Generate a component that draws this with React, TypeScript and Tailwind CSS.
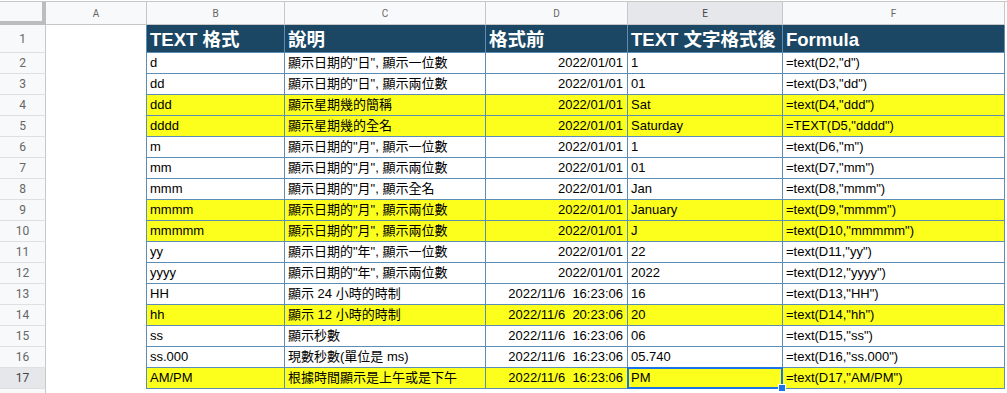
import React from "react";

type Row = { b: string; c: string; d: string; e: string; f: string; y?: boolean };

const rows: Row[] = [
  { b: "d", c: '顯示日期的"日", 顯示一位數', d: "2022/01/01", e: "1", f: '=text(D2,"d")' },
  { b: "dd", c: '顯示日期的"日", 顯示兩位數', d: "2022/01/01", e: "01", f: '=text(D3,"dd")' },
  { b: "ddd", c: "顯示星期幾的簡稱", d: "2022/01/01", e: "Sat", f: '=text(D4,"ddd")', y: true },
  { b: "dddd", c: "顯示星期幾的全名", d: "2022/01/01", e: "Saturday", f: '=TEXT(D5,"dddd")', y: true },
  { b: "m", c: '顯示日期的"月", 顯示一位數', d: "2022/01/01", e: "1", f: '=text(D6,"m")' },
  { b: "mm", c: '顯示日期的"月", 顯示兩位數', d: "2022/01/01", e: "01", f: '=text(D7,"mm")' },
  { b: "mmm", c: '顯示日期的"月", 顯示全名', d: "2022/01/01", e: "Jan", f: '=text(D8,"mmm")' },
  { b: "mmmm", c: '顯示日期的"月", 顯示兩位數', d: "2022/01/01", e: "January", f: '=text(D9,"mmmm")', y: true },
  { b: "mmmmm", c: '顯示日期的"月", 顯示兩位數', d: "2022/01/01", e: "J", f: '=text(D10,"mmmmm")', y: true },
  { b: "yy", c: '顯示日期的"年", 顯示一位數', d: "2022/01/01", e: "22", f: '=text(D11,"yy")' },
  { b: "yyyy", c: '顯示日期的"年", 顯示兩位數', d: "2022/01/01", e: "2022", f: '=text(D12,"yyyy")' },
  { b: "HH", c: "顯示 24 小時的時制", d: "2022/11/6  16:23:06", e: "16", f: '=text(D13,"HH")' },
  { b: "hh", c: "顯示 12 小時的時制", d: "2022/11/6  20:23:06", e: "20", f: '=text(D14,"hh")', y: true },
  { b: "ss", c: "顯示秒數", d: "2022/11/6  16:23:06", e: "06", f: '=text(D15,"ss")' },
  { b: "ss.000", c: "現數秒數(單位是 ms)", d: "2022/11/6  16:23:06", e: "05.740", f: '=text(D16,"ss.000")' },
  { b: "AM/PM", c: "根據時間顯示是上午或是下午", d: "2022/11/6  16:23:06", e: "PM", f: '=text(D17,"AM/PM")', y: true },
];

export default function App() {
  return (
    <div className="w-[1007px] h-[393px] overflow-hidden bg-white text-black font-['Liberation_Sans','Noto_Sans_CJK_TC',sans-serif]">
      <div className="h-px bg-white" />
      {/* column headers */}
      <div className="flex border-t border-[#c7c7c7] font-['Roboto',sans-serif] text-[10px] text-[#666]">
        <div className="w-[46px] h-[23px] bg-[#f8f9fa] border-r-4 border-b-4 border-[#bdbdbd]" />
        {[
          ["A", "w-[101px] bg-[#f8f9fa]"],
          ["B", "w-[138px] bg-[#f8f9fa]"],
          ["C", "w-[201px] bg-[#f8f9fa]"],
          ["D", "w-[142px] bg-[#f8f9fa]"],
          ["E", "w-[155px] bg-[#e6e7ea] text-[#444]"],
          ["F", "w-[222px] bg-[#f8f9fa]"],
        ].map(([l, cls]) => (
          <div key={l} className={`${cls} h-[23px] border-r border-b border-[#c7c7c7] flex items-center justify-center`}>
            {l}
          </div>
        ))}
      </div>
      {/* header row 1 */}
      <div className="flex h-[28px]">
        <div className="w-[46px] h-full bg-[#f8f9fa] border-r border-r-[#c7c7c7] border-b border-b-[#e0e0e0] flex items-center justify-center font-['Roboto',sans-serif] text-[12px] text-[#666]">
          1
        </div>
        <div className="w-[100px] h-full" />
        <div className="flex h-full bg-[#1b4764] text-white font-bold text-[18.5px] leading-[22px]">
          <div className="w-[139px] border-l border-r border-b border-[#5b8db5] flex items-end pl-[3px] pb-[1px]">TEXT 格式</div>
          <div className="w-[201px] border-r border-b border-[#5b8db5] flex items-end pl-[3px] pb-[1px]">說明</div>
          <div className="w-[142px] border-r border-b border-[#5b8db5] flex items-end pl-[3px] pb-[1px]">格式前</div>
          <div className="w-[155px] border-r border-b border-[#5b8db5] flex items-end pl-[3px] pb-[1px] whitespace-nowrap">TEXT 文字格式後</div>
          <div className="w-[222px] border-r border-b border-[#5b8db5] flex items-end pl-[3px] pb-[1px]">Formula</div>
        </div>
      </div>
      {rows.map((r, i) => {
        const n = i + 2;
        const last = n === 17;
        const bg = r.y ? "bg-[#fcff1c]" : "bg-white";
        const cell = "h-full border-r border-b border-[#5b8db5] flex items-end pb-[2px] leading-[17px] text-[13px] whitespace-pre overflow-hidden";
        return (
          <div key={n} className="flex h-[21px]">
            <div
              className={`w-[46px] h-full ${last ? "bg-[#e6e7ea] text-[#444]" : "bg-[#f8f9fa] text-[#666]"} border-r border-r-[#c7c7c7] border-b border-b-[#e0e0e0] flex items-center justify-center font-['Roboto',sans-serif] text-[12px]`}
            >
              {n}
            </div>
            <div className="w-[100px] h-full" />
            <div className={`flex h-full ${bg}`}>
              <div className={`w-[139px] border-l pl-[3px] ${cell}`}>{r.b}</div>
              <div className={`w-[201px] pl-[3px] ${cell}`}>{r.c}</div>
              <div className={`w-[142px] justify-end pr-[4px] ${cell}`}>{r.d}</div>
              <div className={`w-[155px] pl-[3px] relative !overflow-visible ${cell}`}>
                {r.e}
                {last && (
                  <div className="absolute -left-px -top-px w-[156px] h-[22px] border-2 border-[#1a73e8]">
                    <div className="absolute -right-[5px] -bottom-[5px] w-[8px] h-[8px] bg-[#1a73e8] border border-white" />
                  </div>
                )}
              </div>
              <div className={`w-[222px] pl-[3px] ${cell}`}>{r.f}</div>
            </div>
          </div>
        );
      })}
      <div className="flex h-[21px]">
        <div className="w-[46px] h-full bg-[#f8f9fa] border-r border-r-[#c7c7c7] border-b border-b-[#e0e0e0]" />
      </div>
    </div>
  );
}
